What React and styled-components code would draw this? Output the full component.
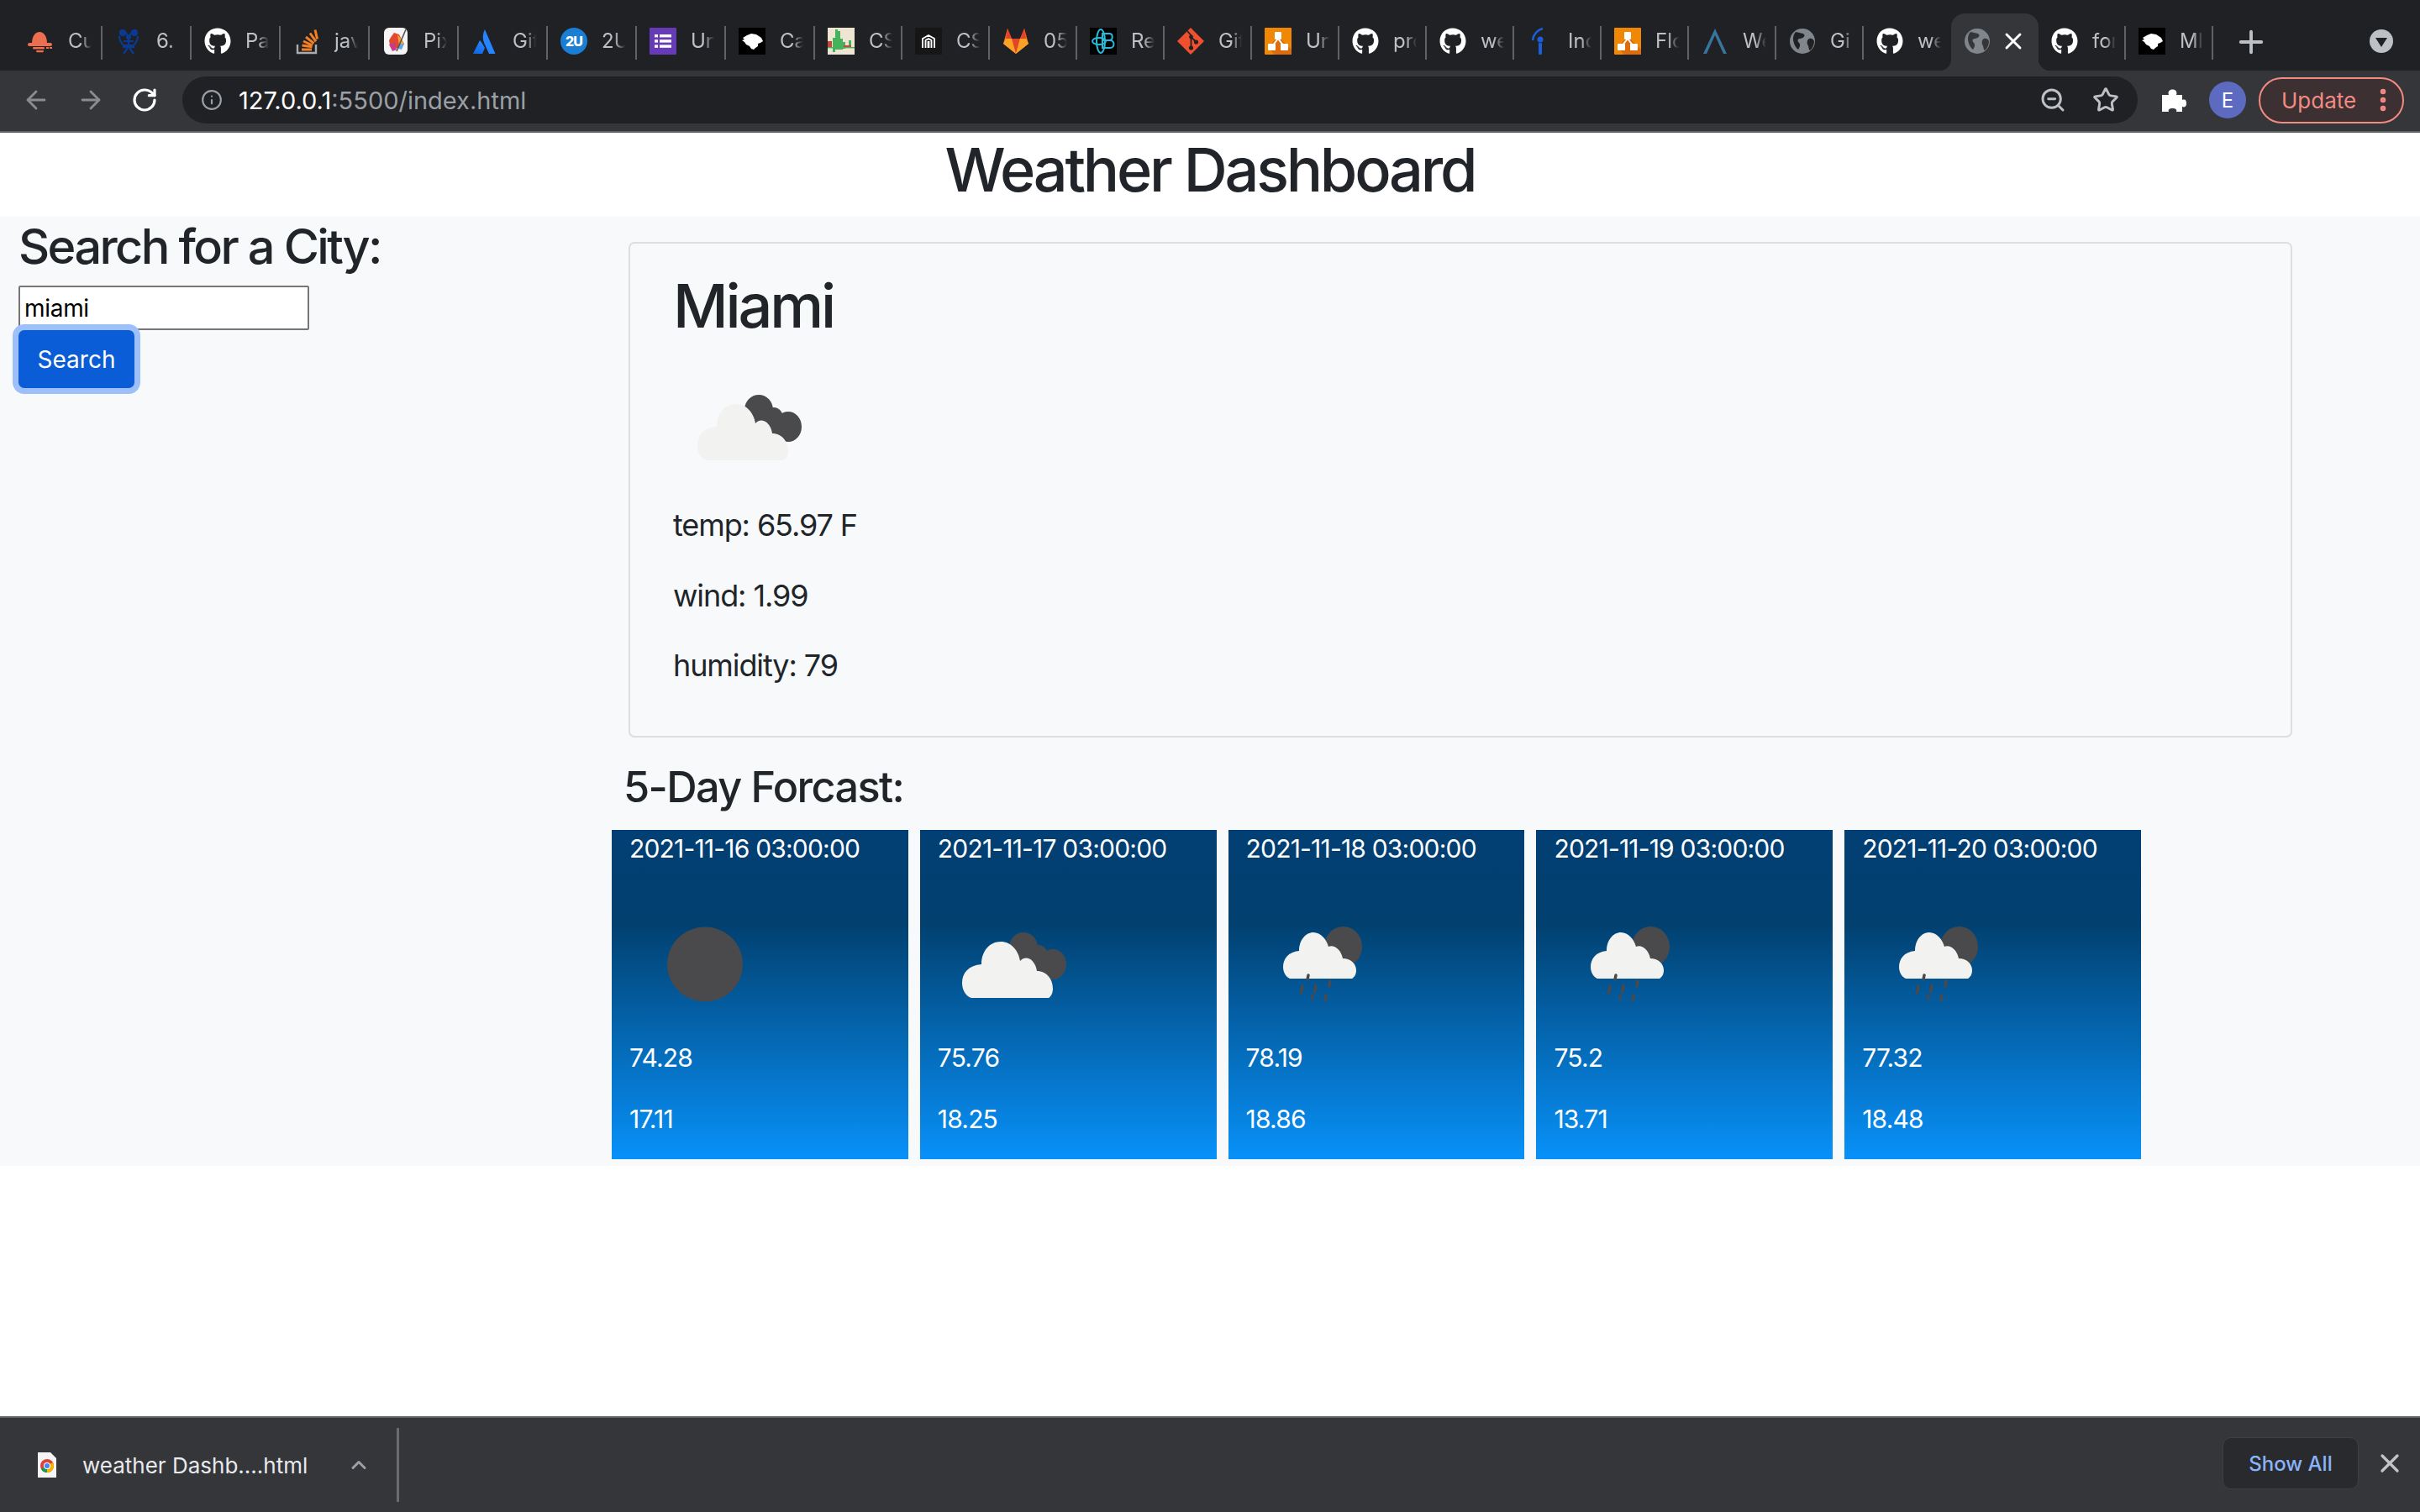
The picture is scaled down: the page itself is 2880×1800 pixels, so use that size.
import React from "react";
import styled, { createGlobalStyle } from "styled-components";
import { ArrowLeft, ArrowRight, RotateCw, Info, ZoomOut, Star, X, ChevronUp, Plus, EllipsisVertical } from "lucide-react";
import { FaGithub } from "react-icons/fa";

const Global = createGlobalStyle`
  html, body { margin: 0; padding: 0; background: #fff; }
  body { font-family: Inter, "Liberation Sans", sans-serif; }
  * { box-sizing: border-box; }
`;

const Screen = styled.div`
  width: 2880px;
  height: 1800px;
  display: flex;
  flex-direction: column;
  overflow: hidden;
`;

/* ---------- Browser chrome ---------- */
const TabStrip = styled.div`
  height: 84px;
  background: #202124;
  display: flex;
  align-items: flex-end;
  padding-left: 16px;
`;
const Tab = styled.div`
  position: relative;
  width: ${(p) => p.$w}px;
  height: 68px;
  display: flex;
  align-items: center;
  padding: 0 0 0 ${(p) => (p.$first ? 16 : 15)}px;
  gap: 17px;
  background: ${(p) => (p.$active ? "#35363a" : "transparent")};
  border-radius: ${(p) => (p.$active ? "16px 16px 0 0" : "0")};
  &::after {
    content: "";
    display: ${(p) => (p.$noSep ? "none" : "block")};
    position: absolute;
    right: 0;
    top: 15px;
    width: 2px;
    height: 40px;
    background: #5f6368;
  }
  ${(p) =>
    p.$active &&
    `
    &::before {
      content: "";
      position: absolute;
      left: -14px;
      right: -14px;
      bottom: 0;
      height: 14px;
      background:
        radial-gradient(circle at 0 0, #202124 14px, #35363a 14.5px) left / 14px 14px no-repeat,
        radial-gradient(circle at 100% 0, #202124 14px, #35363a 14.5px) right / 14px 14px no-repeat;
    }
  `}
`;
const FavSlot = styled.span`
  width: 32px;
  height: 32px;
  flex: none;
  display: block;
  color: #fff;
  margin-top: -3px;
  svg { display: block; }
`;
const TabTitle = styled.span`
  width: 28px;
  overflow: hidden;
  white-space: nowrap;
  font-size: 24px;
  line-height: 32px;
  color: #bdc1c6;
  margin-top: -3px;
  -webkit-mask-image: linear-gradient(to right, #000 55%, transparent 100%);
  mask-image: linear-gradient(to right, #000 55%, transparent 100%);
`;
const TabClose = styled.span`
  display: flex;
  color: #fff;
  margin: -3px 0 0 -6px;
`;
const NewTab = styled.span`
  display: flex;
  color: #bdc1c6;
  margin: 0 0 13px 24px;
`;
const TabMenu = styled.span`
  width: 28px;
  height: 28px;
  border-radius: 50%;
  background: #bdc1c6;
  margin: 0 0 21px 120px;
  display: flex;
  align-items: center;
  justify-content: center;
  &::after {
    content: "";
    border-left: 7px solid transparent;
    border-right: 7px solid transparent;
    border-top: 11px solid #202124;
    margin-top: 3px;
  }
`;

const Toolbar = styled.div`
  height: 74px;
  background: #35363a;
  border-bottom: 2px solid #5f6063;
  display: flex;
  align-items: center;
  padding: 0 18px 2px 26px;
`;
const NavButton = styled.span`
  display: flex;
  width: ${(p) => p.$w || 65}px;
  color: ${(p) => (p.$on ? "#fff" : "#8a8c90")};
`;
const Omnibox = styled.div`
  width: 2327px;
  height: 56px;
  margin-left: 5px;
  border-radius: 28px;
  background: #202124;
  display: flex;
  align-items: center;
  padding: 0 22px 0 22px;
  color: #9aa0a6;
`;
const UrlText = styled.span`
  margin-left: 19px;
  font-size: 29px;
  letter-spacing: 0;
  color: #9aa0a6;
  flex: 1;
  b { font-weight: 400; color: #fff; }
`;
const OmniAction = styled.span`
  display: flex;
  color: #bdc1c6;
  margin-left: ${(p) => p.$ml || 0}px;
`;
const Ext = styled.span`
  display: flex;
  color: #fff;
  margin-left: 28px;
`;
const Avatar = styled.span`
  width: 44px;
  height: 44px;
  border-radius: 50%;
  background: #5c6bc0;
  color: #fff;
  font-size: 24px;
  display: flex;
  align-items: center;
  justify-content: center;
  margin-left: 27px;
`;
const UpdatePill = styled.span`
  width: 173px;
  height: 55px;
  margin-left: 15px;
  border: 2px solid #f28b82;
  border-radius: 28px;
  background: #3c3032;
  color: #f28b82;
  font-size: 26px;
  display: flex;
  align-items: center;
  justify-content: space-between;
  padding: 0 6px 0 25px;
`;

/* ---------- Page ---------- */
const Viewport = styled.div`
  flex: 1;
  background: #fff;
  color: #212529;
`;
const Header = styled.header`
  height: 100px;
  display: flex;
  justify-content: center;
`;
const Title = styled.h1`
  margin: 0;
  font-size: 72px;
  font-weight: 500;
  line-height: 88px;
  letter-spacing: -3.2px;
`;
const Main = styled.main`
  background: #f8f9fa;
  display: flex;
  padding-bottom: 8px;
`;
const Sidebar = styled.aside`
  width: 728px;
  padding: 5px 0 0 22px;
  display: flex;
  flex-direction: column;
  align-items: flex-start;
`;
const SearchHeading = styled.h2`
  margin: 0 0 17px;
  font-size: 57.6px;
  font-weight: 500;
  line-height: 60px;
  letter-spacing: -2.6px;
`;
const CityInput = styled.input`
  width: 346px;
  height: 53px;
  border: 2px solid #767676;
  border-radius: 2px;
  background: #fff;
  color: #000;
  font: 400 28px Inter, sans-serif;
  letter-spacing: -0.3px;
  padding: 0 5px;
  outline: none;
`;
const SearchButton = styled.button`
  width: 138px;
  height: 69px;
  border: none;
  border-radius: 7px;
  background: #0a5dd6;
  color: #fff;
  font: 400 28px Inter, sans-serif;
  box-shadow: 0 0 0 7px #9dbffa;
  padding: 0;
`;
const Content = styled.section`
  flex: 1;
  padding-top: 30px;
  display: flex;
  flex-direction: column;
`;
const CurrentCard = styled.div`
  width: 1980px;
  margin-left: 20px;
  border: 2px solid #dcdee0;
  border-radius: 7px;
  padding: 34px 51px 64px;
`;
const CityName = styled.h1`
  margin: 0 0 56px;
  font-size: 72px;
  font-weight: 500;
  line-height: 80px;
  letter-spacing: -3.2px;
`;
const Stat = styled.p`
  margin: ${(p) => p.$mt}px 0 0;
  font-size: 36px;
  line-height: 40px;
  letter-spacing: -1.1px;
`;
const ForecastHeading = styled.h3`
  margin: 29px 0 21px 14px;
  font-size: 50.4px;
  font-weight: 500;
  line-height: 60px;
  letter-spacing: -1.6px;
`;
const ForecastRow = styled.div`
  width: 1820px;
  display: flex;
  gap: 14px;
`;
const DayCard = styled.article`
  flex: 1;
  height: 392px;
  padding: 2px 21px 0;
  color: #fff;
  background: linear-gradient(180deg, #023f74 0%, #01406f 28%, #0891f9 100%);
`;
const DayDate = styled.div`
  font-size: 30px;
  line-height: 40px;
  white-space: nowrap;
  letter-spacing: -0.8px;
`;
const IconBox = styled.svg`
  display: block;
  width: 160px;
  height: 100px;
  margin-top: ${(p) => p.$mt || 0}px;
`;
const DayValue = styled.p`
  margin: ${(p) => p.$mt}px 0 0;
  font-size: 30px;
  line-height: 40px;
  letter-spacing: -0.8px;
`;

/* ---------- Download shelf ---------- */
const Shelf = styled.footer`
  height: 114px;
  background: #35363a;
  border-top: 2px solid #5f6063;
  display: flex;
  align-items: center;
  padding-left: 45px;
`;
const FileName = styled.span`
  margin-left: 31px;
  font-size: 26px;
  color: #e8eaed;
  white-space: nowrap;
`;
const ShelfChevron = styled.span`
  display: flex;
  color: #9aa0a6;
  margin-left: 47px;
`;
const ShelfDivider = styled.span`
  width: 3px;
  height: 88px;
  background: #6b6c6f;
  margin-left: 31px;
`;
const ShowAll = styled.span`
  margin-left: auto;
  width: 162px;
  height: 62px;
  border: 1px solid #3f4044;
  border-radius: 10px;
  background: #292a2d;
  color: #8ab4f8;
  font-size: 24px;
  font-weight: 500;
  display: flex;
  align-items: center;
  justify-content: center;
  margin-top: -4px;
`;
const ShelfClose = styled.span`
  display: flex;
  color: #c4c4c4;
  margin: -4px 18px 0 19px;
`;

/* ---------- Favicons ---------- */
function Globe({ fill = "#80868b", bg = "#202124" }) {
  return (
    <svg width="32" height="32" viewBox="0 0 32 32">
      <circle cx="16" cy="16" r="15" fill={fill} />
      <path d="M8 5c3 1 8 1 10 3s-2 5-5 5-3 3-1 5 1 5-1 8c-3-2-6-8-6-13 0-3 1-6 3-8zM24 13c2-1 5 0 6 3 0 4-2 9-5 11-2-1-1-5-3-7-1-3 0-6 2-7z" fill={bg} />
    </svg>
  );
}

function Favicon({ kind }) {
  switch (kind) {
    case "cu":
      return (
        <svg width="32" height="32" viewBox="0 0 32 32" fill="#ee6f4f">
          <path d="M6 19c0-9 4-14 9-14s9 5 9 14z" />
          <rect x="1" y="18" width="29" height="4" rx="2" />
          <rect x="7" y="23" width="14" height="2.5" rx="1.2" />
          <rect x="23" y="23" width="3" height="2" />
          <rect x="27" y="23" width="3" height="2" />
          <rect x="11" y="27" width="9" height="2.2" rx="1.1" />
        </svg>
      );
    case "crown":
      return (
        <svg width="32" height="32" viewBox="0 0 32 32" fill="none" stroke="#0a3a94" strokeWidth="2.2">
          <path d="M5 10c0 5 3 9 5 11h12c2-2 5-6 5-11" />
          <path d="M10 16h12M9 23h14M12 5l4 6 4-6M16 11v10M10 31l5-7M22 31l-5-7" />
          <circle cx="9" cy="6" r="3" fill="#0a3a94" />
          <circle cx="23" cy="6" r="3" fill="#0a3a94" />
          <circle cx="16" cy="11" r="2" fill="#0a3a94" />
        </svg>
      );
    case "gh":
      return <FaGithub size={32} color="#fff" />;
    case "so":
      return (
        <svg width="32" height="32" viewBox="0 0 32 32">
          <path d="M5 20v10h22V20" fill="none" stroke="#a9adb1" strokeWidth="2.4" />
          <g stroke="#f48024" strokeWidth="3">
            <path d="M10 26h12M10.500 21l12 1.800M12 16l11 5M15 11l9.500 7.600M20 6.500l7 9.800M26 2.500l2.500 11" />
          </g>
        </svg>
      );
    case "pix":
      return (
        <svg width="32" height="32" viewBox="0 0 32 32">
          <rect width="28" height="32" x="2" rx="6" fill="#f5f5f5" />
          <path d="M14 6l6 2 3 6 3 5-4 6-5-1-4 3-4-6-1-6 3-5z" fill="#e3472f" />
          <path d="M18 8l5 6 3 5-6 2z" fill="#f2a33a" />
          <path d="M8 20l7-2 2 8-5 2z" fill="#c83a8c" />
          <path d="M20 20l6-1-3 7-4-1z" fill="#5aa9e6" />
          <path d="M28 2L17 28" stroke="#555" strokeWidth="1.6" />
        </svg>
      );
    case "atl":
      return (
        <svg width="32" height="32" viewBox="0 0 32 32">
          <defs>
            <linearGradient id="atl" x1="0" y1="1" x2="0.5" y2="0">
              <stop offset="0" stopColor="#0c66e4" />
              <stop offset="1" stopColor="#2684ff" />
            </linearGradient>
          </defs>
          <path d="M16 2c-3 6-3 12 0 18l5 11h7.500z" fill="#2684ff" />
          <path d="M10 15L2 31h11l3-7c-2-3-3-6-6-9z" fill="url(#atl)" />
        </svg>
      );
    case "2u":
      return (
        <svg width="32" height="32" viewBox="0 0 32 32">
          <circle cx="16" cy="16" r="16" fill="#1a7ed4" />
          <text x="16" y="22" textAnchor="middle" fontFamily="Inter, sans-serif" fontWeight="800" fontSize="16" letterSpacing="-1" fill="#fff">2U</text>
        </svg>
      );
    case "forms":
      return (
        <svg width="32" height="32" viewBox="0 0 32 32">
          <rect width="32" height="32" rx="1" fill="#673ab7" />
          <g fill="#fff">
            <rect x="6" y="8" width="4" height="3.4" /><rect x="12" y="8" width="14" height="3.4" />
            <rect x="6" y="14.2" width="4" height="3.4" /><rect x="12" y="14.2" width="14" height="3.4" />
            <rect x="6" y="20.4" width="4" height="3.4" /><rect x="12" y="20.4" width="14" height="3.4" />
          </g>
        </svg>
      );
    case "lion":
      return (
        <svg width="32" height="32" viewBox="0 0 32 32">
          <rect width="32" height="32" fill="#000" />
          <path d="M5 12l5-3 5-2 6 1 6 4 2 4-3 2-3 1 0 3-3 2-2 2-3-1-2-3-4-2-2-3-3-2 3-1z" fill="#fff" />
        </svg>
      );
    case "chart":
      return (
        <svg width="32" height="32" viewBox="0 0 32 32">
          <rect width="32" height="32" fill="#eee6d2" />
          <g fill="#45b35d">
            <rect x="6" y="12" width="3" height="17" /><rect x="9" y="2" width="3" height="24" />
            <rect x="12" y="4" width="3" height="22" /><rect x="15" y="13" width="3" height="13" />
            <rect x="18" y="17" width="3" height="8" /><rect x="25" y="15" width="3" height="8" />
          </g>
          <rect x="0" y="16" width="5" height="7" fill="#c8463a" />
          <rect x="19" y="21" width="9" height="2" fill="#c8463a" />
          <rect x="0" y="23" width="32" height="1.4" fill="#45b35d" />
        </svg>
      );
    case "arch":
      return (
        <svg width="32" height="32" viewBox="0 0 32 32" fill="none">
          <rect width="32" height="32" fill="#161616" />
          <path d="M9 24V13l7-4 7 4v11M12.500 24V15l3.500-2 3.500 2v9M15.500 24v-7h1v7" stroke="#fff" strokeWidth="1.8" />
        </svg>
      );
    case "gitlab":
      return (
        <svg width="32" height="32" viewBox="0 0 32 32">
          <path d="M16 31L1 19 6 1l5 12h10l5-12 5 18z" fill="#fc6d26" />
          <path d="M16 31l-5-18h10z" fill="#e24329" />
          <path d="M16 31L1 19l3-6h7z" fill="#fca326" />
          <path d="M16 31l15-12-3-6h-7z" fill="#fca326" />
          <path d="M6 1L4 13h7zM26 1l2 12h-7z" fill="#e24329" />
        </svg>
      );
    case "react":
      return (
        <svg width="32" height="32" viewBox="0 0 32 32" fill="none" stroke="#2ab9d8" strokeWidth="2">
          <rect width="32" height="32" fill="#000" stroke="none" />
          <path d="M15 7h8c5 0 5 8 0 8h-8zM15 15h9c6 0 6 9 0 9h-9zM15 7v17" />
          <ellipse cx="11" cy="16" rx="8" ry="4" />
          <ellipse cx="13" cy="16" rx="5" ry="14" />
        </svg>
      );
    case "git":
      return (
        <svg width="32" height="32" viewBox="0 0 32 32">
          <path d="M16 0l16 16-16 16L0 16z" fill="#f1502f" />
          <path d="M12 4l4.500 5v14M16.500 11l6 6" stroke="#202124" strokeWidth="1.8" fill="none" />
          <circle cx="16.500" cy="24" r="2.600" fill="#202124" />
          <circle cx="22.500" cy="17" r="2.600" fill="#202124" />
          <circle cx="16.500" cy="11" r="2.400" fill="#202124" />
        </svg>
      );
    case "drawio":
      return (
        <svg width="32" height="32" viewBox="0 0 32 32">
          <rect width="32" height="32" rx="1" fill="#f08705" />
          <path d="M16 10l16 16v6H12l-8-8z" fill="#df6c0c" />
          <path d="M16 13L9 22M16 13l7 9" stroke="#fff" strokeWidth="2" />
          <rect x="12" y="5" width="8" height="9" rx="1" fill="#fff" />
          <rect x="4" y="19" width="9" height="8" rx="1" fill="#fff" />
          <rect x="19" y="19" width="9" height="8" rx="1" fill="#fff" />
        </svg>
      );
    case "info":
      return (
        <svg width="32" height="32" viewBox="0 0 32 32" fill="none">
          <path d="M7 15C8 8 12 3 19 1" stroke="#1a5fd8" strokeWidth="2.600" />
          <circle cx="16" cy="14" r="3.500" fill="#1a5fd8" />
          <rect x="14" y="18" width="4" height="14" rx="1" fill="#1a5fd8" />
        </svg>
      );
    case "wave":
      return (
        <svg width="32" height="32" viewBox="0 0 32 32" fill="none">
          <path d="M2 31L16 1l14 30h-4L16 9 6 31z" fill="#38749c" />
        </svg>
      );
    case "globe":
      return <Globe />;
    case "globeActive":
      return <Globe bg="#35363a" />;
    default:
      return null;
  }
}

/* ---------- Weather icons ---------- */
function Icon({ kind, mt }) {
  const white = "#f2f2f0";
  const dark = "#4a4a4c";
  return (
    <IconBox $mt={mt} viewBox="0 0 160 100">
      {kind === "moon" && <ellipse cx="90" cy="48" rx="45" ry="44.500" fill={dark} />}
      {kind === "clouds" && (
        <g>
          <ellipse cx="102" cy="28" rx="17" ry="18" fill={dark} />
          <ellipse cx="120" cy="38" rx="11" ry="13" fill={dark} />
          <ellipse cx="137" cy="48" rx="16" ry="18" fill={dark} />
          <ellipse cx="118" cy="52" rx="16" ry="16" fill={dark} />
          <path
            d="M40 88C33 86 29 78 29 70C29 58 37 49 52 48C52 32 62 21 75 21C87 21 96 31 98 44C105 36 116 42 118 56C130 56 137 66 137 77C137 82 135 86 132 88Z"
            fill={white}
          />
        </g>
      )}
      {kind === "rain" && (
        <g>
          <ellipse cx="115.500" cy="27" rx="22.500" ry="24" fill={dark} />
          <path
            d="M52 65C47 63 44 57 44 51C44 42 50 33 63 32C63 19 71 10 80 10C89 10 96 19 98 27C104 24 113 30 115 41C124 41 131 47 131 55C131 60 129 63 126 65Z"
            fill={white}
          />
          <g stroke={dark} strokeWidth="3.500" strokeLinecap="round">
            <path d="M74 61l-1 5M67 74l-1.500 8M83 73l-1.500 8M100 68l-1 6M79 86l-.5 3M95 85l-1.200 6" />
          </g>
        </g>
      )}
    </IconBox>
  );
}

const tabs = [
  ["cu", "Cu"], ["crown", "6."], ["gh", "Pa"], ["so", "jav"], ["pix", "Pix"], ["atl", "Git"],
  ["2u", "2U"], ["forms", "Un"], ["lion", "Ca"], ["chart", "CS"], ["arch", "CS"], ["gitlab", "05"],
  ["react", "Re"], ["git", "Git"], ["drawio", "Un"], ["gh", "pro"], ["gh", "we"], ["info", "Inc"],
  ["drawio", "Flo"], ["wave", "We"], ["globe", "Gi"], ["gh", "we"], ["globeActive", null], ["gh", "for"], ["lion", "MI"],
];

const days = [
  { date: "2021-11-16 03:00:00", icon: "moon", temp: "74.28", wind: "17.11" },
  { date: "2021-11-17 03:00:00", icon: "clouds", temp: "75.76", wind: "18.25" },
  { date: "2021-11-18 03:00:00", icon: "rain", temp: "78.19", wind: "18.86" },
  { date: "2021-11-19 03:00:00", icon: "rain", temp: "75.2", wind: "13.71" },
  { date: "2021-11-20 03:00:00", icon: "rain", temp: "77.32", wind: "18.48" },
];

export default function App() {
  return (
    <Screen>
      <Global />
      <TabStrip>
        {tabs.map(([kind, label], i) => (
          <Tab key={i} $w={i < 9 ? 106 : 104} $first={i === 0} $active={label === null} $noSep={label === null || i === 21}>
            <FavSlot><Favicon kind={kind} /></FavSlot>
            {label === null ? (
              <TabClose><X size={32} strokeWidth={2.2} /></TabClose>
            ) : (
              <TabTitle>{label}</TabTitle>
            )}
          </Tab>
        ))}
        <NewTab><Plus size={42} strokeWidth={2.2} /></NewTab>
        <TabMenu />
      </TabStrip>

      <Toolbar>
        <NavButton><ArrowLeft size={34} strokeWidth={2} /></NavButton>
        <NavButton><ArrowRight size={34} strokeWidth={2} /></NavButton>
        <NavButton $on $w={56}><RotateCw size={32} strokeWidth={2.4} /></NavButton>
        <Omnibox>
          <Info size={26} strokeWidth={2} />
          <UrlText><b>127.0.0.1</b>:5500/index.html</UrlText>
          <OmniAction><ZoomOut size={32} strokeWidth={2.2} /></OmniAction>
          <OmniAction $ml={31}><Star size={32} strokeWidth={2.2} /></OmniAction>
        </Omnibox>
        <Ext>
          <svg width="30" height="27" viewBox="0 0 30 27" fill="#fff">
            <path d="M1 7h8C7.500 3 10 .5 13.500 .5S19.500 3 18 7h7v6c4-1.500 5 1 5 4s-1 5.500-5 4v6H18c1-3-1-4-4.500-4S8 24 9 27H1z" />
          </svg>
        </Ext>
        <Avatar>E</Avatar>
        <UpdatePill>
          Update
          <EllipsisVertical size={34} strokeWidth={2.6} />
        </UpdatePill>
      </Toolbar>

      <Viewport>
        <Header><Title>Weather Dashboard</Title></Header>
        <Main>
          <Sidebar>
            <SearchHeading>Search for a City:</SearchHeading>
            <CityInput defaultValue="miami" />
            <SearchButton>Search</SearchButton>
          </Sidebar>
          <Content>
            <CurrentCard>
              <CityName>Miami</CityName>
              <Icon kind="clouds" />
              <Stat $mt={45}>temp: 65.97 F</Stat>
              <Stat $mt={44}>wind: 1.99</Stat>
              <Stat $mt={43}>humidity: 79</Stat>
            </CurrentCard>
            <ForecastHeading>5-Day Forcast:</ForecastHeading>
            <ForecastRow>
              {days.map((d) => (
                <DayCard key={d.date}>
                  <DayDate>{d.date}</DayDate>
                  <Icon kind={d.icon} mt={70} />
                  <DayValue $mt={39}>{d.temp}</DayValue>
                  <DayValue $mt={33}>{d.wind}</DayValue>
                </DayCard>
              ))}
            </ForecastRow>
          </Content>
        </Main>
      </Viewport>

      <Shelf>
        <svg width="22" height="30" viewBox="0 0 22 30">
          <path d="M0 0h15l7 7v23H0z" fill="#f5f5f5" />
          <circle cx="11" cy="16" r="8" fill="#db4437" />
          <path d="M11 16l-7 4a8 8 0 0 0 7 4z" fill="#0f9d58" />
          <path d="M11 16l7-4a8 8 0 0 1-7 12z" fill="#f4b400" />
          <circle cx="11" cy="16" r="4" fill="#fff" />
          <circle cx="11" cy="16" r="3" fill="#4285f4" />
        </svg>
        <FileName>weather Dashb....html</FileName>
        <ShelfChevron><ChevronUp size={28} strokeWidth={2.6} /></ShelfChevron>
        <ShelfDivider />
        <ShowAll>Show All</ShowAll>
        <ShelfClose><X size={36} strokeWidth={2.2} /></ShelfClose>
      </Shelf>
    </Screen>
  );
}
